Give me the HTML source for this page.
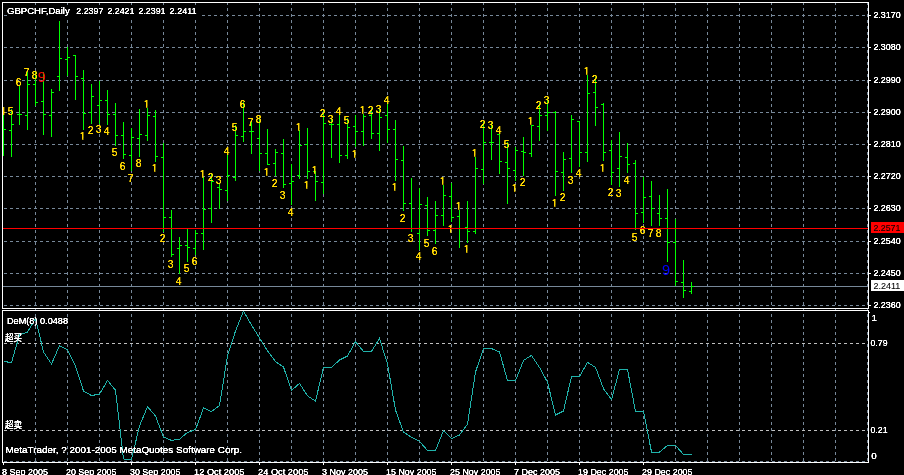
<!DOCTYPE html>
<html lang="en"><head><meta charset="utf-8"><title>GBPCHF,Daily</title>
<style>html,body{margin:0;padding:0;background:#000;overflow:hidden}svg{display:block}text{font-family:"Liberation Sans", sans-serif;font-size:9.8px;fill:#fff;stroke:#fff;stroke-width:.08px;white-space:pre}.cjk{font-family:"Liberation Sans","Noto Sans CJK SC",sans-serif;font-size:8.6px;stroke-width:.1px}.c{shape-rendering:crispEdges}.y{fill:#ffd700;stroke:#ffd700;stroke-width:.05px;font-size:10.3px;text-anchor:middle}</style></head><body>
<svg width="904" height="475" viewBox="0 0 904 475" style="will-change:transform">
<defs><filter id="th" x="0" y="0" width="100%" height="100%" filterUnits="userSpaceOnUse" color-interpolation-filters="sRGB"><feComponentTransfer><feFuncA type="linear" slope="1.8" intercept="-0.12"/></feComponentTransfer></filter><clipPath id="ca"><rect x="3" y="3" width="865" height="305"/></clipPath><clipPath id="c1"><rect x="-4" y="-10" width="8" height="9.15"/><rect x="-0.4" y="-1" width="1.15" height="1.2"/></clipPath></defs>
<rect width="904" height="475" fill="#000"/>
<g class="c" stroke="#778899" stroke-width="1" stroke-dasharray="3 3" fill="none">
<line x1="35.5" y1="2" x2="35.5" y2="462"/>
<line x1="67.5" y1="2" x2="67.5" y2="462"/>
<line x1="99.5" y1="2" x2="99.5" y2="462"/>
<line x1="131.5" y1="2" x2="131.5" y2="462"/>
<line x1="163.5" y1="2" x2="163.5" y2="462"/>
<line x1="195.5" y1="2" x2="195.5" y2="462"/>
<line x1="227.5" y1="2" x2="227.5" y2="462"/>
<line x1="259.5" y1="2" x2="259.5" y2="462"/>
<line x1="291.5" y1="2" x2="291.5" y2="462"/>
<line x1="323.5" y1="2" x2="323.5" y2="462"/>
<line x1="355.5" y1="2" x2="355.5" y2="462"/>
<line x1="387.5" y1="2" x2="387.5" y2="462"/>
<line x1="419.5" y1="2" x2="419.5" y2="462"/>
<line x1="451.5" y1="2" x2="451.5" y2="462"/>
<line x1="483.5" y1="2" x2="483.5" y2="462"/>
<line x1="515.5" y1="2" x2="515.5" y2="462"/>
<line x1="547.5" y1="2" x2="547.5" y2="462"/>
<line x1="579.5" y1="2" x2="579.5" y2="462"/>
<line x1="611.5" y1="2" x2="611.5" y2="462"/>
<line x1="643.5" y1="2" x2="643.5" y2="462"/>
<line x1="675.5" y1="2" x2="675.5" y2="462"/>
<line x1="707.5" y1="2" x2="707.5" y2="462"/>
<line x1="739.5" y1="2" x2="739.5" y2="462"/>
<line x1="771.5" y1="2" x2="771.5" y2="462"/>
<line x1="803.5" y1="2" x2="803.5" y2="462"/>
<line x1="835.5" y1="2" x2="835.5" y2="462"/>
<line x1="867.5" y1="2" x2="867.5" y2="462"/>
<line x1="4" y1="15.5" x2="868" y2="15.5"/>
<line x1="4" y1="47.5" x2="868" y2="47.5"/>
<line x1="4" y1="80.5" x2="868" y2="80.5"/>
<line x1="4" y1="112.5" x2="868" y2="112.5"/>
<line x1="4" y1="144.5" x2="868" y2="144.5"/>
<line x1="4" y1="176.5" x2="868" y2="176.5"/>
<line x1="4" y1="208.5" x2="868" y2="208.5"/>
<line x1="4" y1="241.5" x2="868" y2="241.5"/>
<line x1="4" y1="273.5" x2="868" y2="273.5"/>
<line x1="4" y1="305.5" x2="868" y2="305.5"/>
<line x1="4" y1="461.5" x2="868" y2="461.5"/>
</g>
<g class="c" stroke="#c0c0c0" stroke-width="1" stroke-dasharray="3 3" fill="none">
<line x1="4" y1="343.5" x2="868" y2="343.5"/>
<line x1="4" y1="430.5" x2="868" y2="430.5"/>
</g>
<rect class="c" x="3" y="286" width="865" height="1" fill="#778899"/>
<path class="c" clip-path="url(#ca)" d="M3.5 108V156M1 118.5H3M4 129.5H6M11.5 109V157M9 130.5H11M12 124.5H14M19.5 86V125M17 114.5H19M20 114.5H22M27.5 72V130M25 115.5H27M28 84.5H30M35.5 72V106M33 84.5H35M36 102.5H38M43.5 72V135M41 101.5H43M44 114.5H46M51.5 89V137M49 115.5H51M52 92.5H54M59.5 21V91M57 76.5H59M60 58.5H62M67.5 47V76M65 59.5H67M68 57.5H70M75.5 55V100M73 55.5H75M76 76.5H78M83.5 70V130M81 78.5H83M84 113.5H86M91.5 84V124M89 112.5H91M92 96.5H94M99.5 81V124M97 105.5H99M100 100.5H102M107.5 90V125M105 100.5H107M108 114.5H110M115.5 103V146M113 114.5H115M116 135.5H118M123.5 122V159M121 135.5H123M124 154.5H126M131.5 128V171M129 155.5H131M132 137.5H134M139.5 109V157M137 138.5H139M140 134.5H142M147.5 108V141M145 135.5H147M148 115.5H150M155.5 110V162M153 116.5H155M156 156.5H158M163.5 143V232M161 157.5H163M164 217.5H166M171.5 210V257M169 217.5H171M172 254.5H174M179.5 237V274M177 248.5H179M180 245.5H182M187.5 229V262M185 245.5H187M188 247.5H190M195.5 230V255M193 248.5H195M196 233.5H198M203.5 177V250M201 233.5H203M204 209.5H206M211.5 174V223M209 208.5H211M212 181.5H214M219.5 184V209M217 187.5H219M220 189.5H222M227.5 155V201M225 190.5H227M228 175.5H230M235.5 125V181M233 177.5H235M236 135.5H238M243.5 102V142M241 136.5H243M244 131.5H246M251.5 121V154M249 131.5H251M252 131.5H254M259.5 117V171M257 138.5H259M260 153.5H262M267.5 129V165M265 153.5H267M268 164.5H270M275.5 149V176M273 163.5H275M276 152.5H278M283.5 139V188M281 153.5H283M284 184.5H286M291.5 164V205M289 183.5H291M292 181.5H294M299.5 130V179M297 175.5H299M300 145.5H302M307.5 128V179M305 144.5H307M308 171.5H310M315.5 171V201M313 171.5H315M316 181.5H318M323.5 111V194M321 182.5H323M324 123.5H326M331.5 118V158M329 124.5H331M332 124.5H334M339.5 109V163M337 124.5H339M340 155.5H342M347.5 118V159M345 155.5H347M348 127.5H350M355.5 115V147M353 126.5H355M356 131.5H358M363.5 114V146M361 131.5H363M364 116.5H366M371.5 108V139M369 115.5H371M372 133.5H374M379.5 108V151M377 133.5H379M380 117.5H382M387.5 102V143M385 115.5H387M388 129.5H390M395.5 120V181M393 129.5H395M396 159.5H398M403.5 146V211M401 160.5H403M404 203.5H406M411.5 178V232M409 203.5H411M412 228.5H414M419.5 188V250M417 233.5H419M420 204.5H422M427.5 197V236M425 205.5H427M428 230.5H430M435.5 201V244M433 230.5H435M436 215.5H438M443.5 185V226M441 215.5H443M444 195.5H446M451.5 183V222M449 196.5H451M452 217.5H454M459.5 210V248M457 216.5H459M460 228.5H462M467.5 201V243M465 227.5H467M468 231.5H470M475.5 157V234M473 231.5H475M476 168.5H478M483.5 122V184M481 169.5H483M484 142.5H486M491.5 123V160M489 142.5H491M492 142.5H494M499.5 134V174M497 134.5H499M500 161.5H502M507.5 142V204M505 162.5H507M508 168.5H510M515.5 147V181M513 170.5H515M516 150.5H518M523.5 137V176M521 151.5H523M524 152.5H526M531.5 125V157M529 153.5H531M532 125.5H534M539.5 103V141M537 126.5H539M540 115.5H542M547.5 98V131M545 115.5H547M548 112.5H550M555.5 111V196M553 112.5H555M556 171.5H558M563.5 152V191M561 172.5H563M564 159.5H566M571.5 115V173M569 158.5H571M572 119.5H574M579.5 121V167M577 121.5H579M580 152.5H582M587.5 75V162M585 152.5H587M588 93.5H590M595.5 77V126M593 92.5H595M596 107.5H598M603.5 103V161M601 104.5H603M604 152.5H606M611.5 140V185M609 150.5H611M612 172.5H614M619.5 132V187M617 168.5H619M620 156.5H622M627.5 143V173M625 157.5H627M628 164.5H630M635.5 160V230M633 163.5H635M636 213.5H638M643.5 177V223M641 212.5H643M644 197.5H646M651.5 181V226M649 196.5H651M652 208.5H654M659.5 195V226M657 213.5H659M660 218.5H662M667.5 189V262M665 218.5H667M668 242.5H670M675.5 219V286M673 242.5H675M676 281.5H678M683.5 260V298M681 282.5H683M684 290.5H686M691.5 282V294M689 291.5H691M692 286.5H694" stroke="#00ff00" stroke-width="1" fill="none"/>
<g filter="url(#th)" clip-path="url(#ca)">
<text x="2.7" y="114.6" class="y">4</text>
<text x="10.7" y="114.6" class="y">5</text>
<text x="18.7" y="85.6" class="y">6</text>
<text x="26.7" y="75.6" class="y">7</text>
<text x="34.7" y="78.6" class="y">8</text>
<g transform="translate(82.7 139.6)" clip-path="url(#c1)"><text class="y">1</text></g>
<text x="90.7" y="133.6" class="y">2</text>
<text x="98.7" y="132.6" class="y">3</text>
<text x="106.7" y="134.6" class="y">4</text>
<text x="114.7" y="155.6" class="y">5</text>
<text x="122.7" y="169.6" class="y">6</text>
<text x="130.7" y="181.6" class="y">7</text>
<text x="138.7" y="166.6" class="y">8</text>
<g transform="translate(146.7 107.6)" clip-path="url(#c1)"><text class="y">1</text></g>
<g transform="translate(154.7 171.6)" clip-path="url(#c1)"><text class="y">1</text></g>
<text x="162.7" y="241.6" class="y">2</text>
<text x="170.7" y="267.6" class="y">3</text>
<text x="178.7" y="284.6" class="y">4</text>
<text x="186.7" y="271.6" class="y">5</text>
<text x="194.7" y="264.6" class="y">6</text>
<g transform="translate(202.7 177.6)" clip-path="url(#c1)"><text class="y">1</text></g>
<text x="210.7" y="180.6" class="y">2</text>
<text x="218.7" y="183.6" class="y">3</text>
<text x="226.7" y="154.6" class="y">4</text>
<text x="234.7" y="130.6" class="y">5</text>
<text x="242.7" y="107.6" class="y">6</text>
<text x="250.7" y="125.6" class="y">7</text>
<text x="258.7" y="122.6" class="y">8</text>
<g transform="translate(266.7 175.6)" clip-path="url(#c1)"><text class="y">1</text></g>
<text x="274.7" y="186.6" class="y">2</text>
<text x="282.7" y="198.6" class="y">3</text>
<text x="290.7" y="215.6" class="y">4</text>
<g transform="translate(298.7 130.6)" clip-path="url(#c1)"><text class="y">1</text></g>
<g transform="translate(306.7 188.6)" clip-path="url(#c1)"><text class="y">1</text></g>
<g transform="translate(314.7 173.6)" clip-path="url(#c1)"><text class="y">1</text></g>
<text x="322.7" y="116.6" class="y">2</text>
<text x="330.7" y="122.6" class="y">3</text>
<text x="338.7" y="114.6" class="y">4</text>
<text x="346.7" y="123.6" class="y">5</text>
<g transform="translate(354.7 157.6)" clip-path="url(#c1)"><text class="y">1</text></g>
<g transform="translate(362.7 113.6)" clip-path="url(#c1)"><text class="y">1</text></g>
<text x="370.7" y="113.6" class="y">2</text>
<text x="378.7" y="112.6" class="y">3</text>
<text x="386.7" y="103.6" class="y">4</text>
<g transform="translate(394.7 190.6)" clip-path="url(#c1)"><text class="y">1</text></g>
<text x="402.7" y="221.6" class="y">2</text>
<text x="410.7" y="241.6" class="y">3</text>
<text x="418.7" y="259.6" class="y">4</text>
<text x="426.7" y="246.6" class="y">5</text>
<text x="434.7" y="254.6" class="y">6</text>
<g transform="translate(442.7 184.6)" clip-path="url(#c1)"><text class="y">1</text></g>
<g transform="translate(450.7 232.6)" clip-path="url(#c1)"><text class="y">1</text></g>
<g transform="translate(458.7 209.6)" clip-path="url(#c1)"><text class="y">1</text></g>
<g transform="translate(466.7 252.6)" clip-path="url(#c1)"><text class="y">1</text></g>
<g transform="translate(474.7 156.6)" clip-path="url(#c1)"><text class="y">1</text></g>
<text x="482.7" y="127.6" class="y">2</text>
<text x="490.7" y="128.6" class="y">3</text>
<text x="498.7" y="133.6" class="y">4</text>
<text x="506.7" y="147.6" class="y">5</text>
<g transform="translate(514.7 191.6)" clip-path="url(#c1)"><text class="y">1</text></g>
<text x="522.7" y="185.6" class="y">2</text>
<g transform="translate(530.7 124.6)" clip-path="url(#c1)"><text class="y">1</text></g>
<text x="538.7" y="108.6" class="y">2</text>
<text x="546.7" y="103.6" class="y">3</text>
<g transform="translate(554.7 206.6)" clip-path="url(#c1)"><text class="y">1</text></g>
<text x="562.7" y="200.6" class="y">2</text>
<text x="570.7" y="183.6" class="y">3</text>
<text x="578.7" y="176.6" class="y">4</text>
<g transform="translate(586.7 74.6)" clip-path="url(#c1)"><text class="y">1</text></g>
<text x="594.7" y="82.6" class="y">2</text>
<g transform="translate(602.7 171.6)" clip-path="url(#c1)"><text class="y">1</text></g>
<text x="610.7" y="195.6" class="y">2</text>
<text x="618.7" y="196.6" class="y">3</text>
<text x="626.7" y="183.6" class="y">4</text>
<text x="634.7" y="240.6" class="y">5</text>
<text x="642.7" y="233.6" class="y">6</text>
<text x="650.7" y="236.6" class="y">7</text>
<text x="658.7" y="236.6" class="y">8</text>
</g>
<text x="41.7" y="81.5" style="fill:#ff0000;stroke:none;font-size:14.5px;text-anchor:middle">9</text>
<text x="666" y="274.6" style="fill:#0000ff;stroke:none;font-size:14.5px;text-anchor:middle">9</text>
<rect class="c" x="3" y="228" width="865" height="1" fill="#ff0000"/>
<polyline class="c" points="3.5,361.6 11.5,362.4 19.5,335.0 27.5,332.0 35.5,318.5 43.5,352.0 51.5,364.0 59.5,345.6 67.5,350.0 75.5,366.0 83.5,391.0 91.5,395.5 99.5,394.2 107.5,380.4 115.5,390.2 123.5,459.0 131.5,459.4 139.5,426.0 147.5,406.6 155.5,416.0 163.5,437.0 171.5,440.4 179.5,439.2 187.5,432.4 195.5,429.6 203.5,408.0 211.5,411.6 219.5,405.6 227.5,356.0 235.5,331.0 243.5,311.0 251.5,325.0 259.5,338.0 267.5,351.0 275.5,361.6 283.5,367.0 291.5,390.4 299.5,383.4 307.5,395.8 315.5,401.2 323.5,367.4 331.5,367.4 339.5,360.0 347.5,356.0 355.5,341.6 363.5,351.4 371.5,351.4 379.5,338.4 387.5,364.0 395.5,410.0 403.5,432.0 411.5,437.4 419.5,441.4 427.5,450.4 435.5,450.4 443.5,430.6 451.5,438.6 459.5,435.0 467.5,424.0 475.5,372.0 483.5,348.6 491.5,348.6 499.5,352.0 507.5,380.4 515.5,380.4 523.5,360.4 531.5,355.4 539.5,367.4 547.5,382.2 555.5,415.0 563.5,411.0 571.5,376.5 579.5,376.5 587.5,362.4 595.5,367.4 603.5,388.7 611.5,399.5 619.5,369.6 627.5,369.6 635.5,411.4 643.5,411.4 651.5,452.0 659.5,452.0 667.5,445.4 675.5,445.4 683.5,454.4 691.5,454.4" stroke="#20b2aa" stroke-width="1" fill="none"/>
<g class="c" fill="none" stroke="#fff" stroke-width="1">
<rect x="2.5" y="2.5" width="866" height="306"/>
<rect x="2.5" y="310.5" width="866" height="152"/>
</g>
<g class="c" fill="#fff">
<rect x="869" y="15" width="2" height="1"/>
<rect x="869" y="47" width="2" height="1"/>
<rect x="869" y="80" width="2" height="1"/>
<rect x="869" y="112" width="2" height="1"/>
<rect x="869" y="144" width="2" height="1"/>
<rect x="869" y="176" width="2" height="1"/>
<rect x="869" y="208" width="2" height="1"/>
<rect x="869" y="241" width="2" height="1"/>
<rect x="869" y="273" width="2" height="1"/>
<rect x="869" y="305" width="2" height="1"/>
<rect x="3" y="463" width="1" height="2"/>
<rect x="67" y="463" width="1" height="2"/>
<rect x="131" y="463" width="1" height="2"/>
<rect x="195" y="463" width="1" height="2"/>
<rect x="259" y="463" width="1" height="2"/>
<rect x="323" y="463" width="1" height="2"/>
<rect x="387" y="463" width="1" height="2"/>
<rect x="451" y="463" width="1" height="2"/>
<rect x="515" y="463" width="1" height="2"/>
<rect x="579" y="463" width="1" height="2"/>
<rect x="643" y="463" width="1" height="2"/>
<rect x="869" y="312" width="1" height="1"/>
</g>
<rect x="7" y="5" width="192" height="12" fill="#000"/>
<g filter="url(#th)">
<text x="7" y="14" textLength="62.7" lengthAdjust="spacingAndGlyphs">GBPCHF,Daily</text>
<text x="76.3" y="14" textLength="27" lengthAdjust="spacingAndGlyphs">2.2397</text>
<text x="107.4" y="14" textLength="27" lengthAdjust="spacingAndGlyphs">2.2421</text>
<text x="138.5" y="14" textLength="27" lengthAdjust="spacingAndGlyphs">2.2391</text>
<text x="169.60000000000002" y="14" textLength="27" lengthAdjust="spacingAndGlyphs">2.2411</text>
<text x="873.4" y="17.6" textLength="27.4" lengthAdjust="spacingAndGlyphs">2.3170</text>
<text x="873.4" y="49.6" textLength="27.4" lengthAdjust="spacingAndGlyphs">2.3080</text>
<text x="873.4" y="82.6" textLength="27.4" lengthAdjust="spacingAndGlyphs">2.2990</text>
<text x="873.4" y="114.6" textLength="27.4" lengthAdjust="spacingAndGlyphs">2.2900</text>
<text x="873.4" y="146.6" textLength="27.4" lengthAdjust="spacingAndGlyphs">2.2810</text>
<text x="873.4" y="178.6" textLength="27.4" lengthAdjust="spacingAndGlyphs">2.2720</text>
<text x="873.4" y="210.6" textLength="27.4" lengthAdjust="spacingAndGlyphs">2.2630</text>
<text x="873.4" y="243.6" textLength="27.4" lengthAdjust="spacingAndGlyphs">2.2540</text>
<text x="873.4" y="275.6" textLength="27.4" lengthAdjust="spacingAndGlyphs">2.2450</text>
<text x="873.4" y="307.6" textLength="27.4" lengthAdjust="spacingAndGlyphs">2.2360</text>
<rect class="c" x="871" y="222" width="33" height="11" fill="#ff0000"/>
<text x="873.4" y="230.6" textLength="27" lengthAdjust="spacingAndGlyphs" style="fill:#000;stroke:#000">2.2571</text>
<rect class="c" x="871" y="280" width="33" height="11" fill="#fff"/>
<text x="873.4" y="288.6" textLength="27" lengthAdjust="spacingAndGlyphs" style="fill:#000;stroke:#000">2.2411</text>
<text x="7" y="324" textLength="61" lengthAdjust="spacingAndGlyphs">DeM(8) 0.0488</text>
<text x="5" y="340.8" class="cjk">超买</text>
<text x="5" y="427.8" class="cjk">超卖</text>
<text x="5.5" y="452.5" textLength="236.5" lengthAdjust="spacingAndGlyphs">MetaTrader, ? 2001-2005 MetaQuotes Software Corp.</text>
<text x="871.5" y="321">1</text>
<text x="870.5" y="346" textLength="17" lengthAdjust="spacingAndGlyphs">0.79</text>
<text x="870.5" y="433" textLength="17" lengthAdjust="spacingAndGlyphs">0.21</text>
<text x="871.3" y="458.5">0</text>
<text x="2" y="474.6" textLength="46" lengthAdjust="spacingAndGlyphs">8 Sep 2005</text>
<text x="66" y="474.6" textLength="50.5" lengthAdjust="spacingAndGlyphs">20 Sep 2005</text>
<text x="130" y="474.6" textLength="50.5" lengthAdjust="spacingAndGlyphs">30 Sep 2005</text>
<text x="194" y="474.6" textLength="50.5" lengthAdjust="spacingAndGlyphs">12 Oct 2005</text>
<text x="258" y="474.6" textLength="50.5" lengthAdjust="spacingAndGlyphs">24 Oct 2005</text>
<text x="322" y="474.6" textLength="46" lengthAdjust="spacingAndGlyphs">3 Nov 2005</text>
<text x="386" y="474.6" textLength="50.5" lengthAdjust="spacingAndGlyphs">15 Nov 2005</text>
<text x="450" y="474.6" textLength="50.5" lengthAdjust="spacingAndGlyphs">25 Nov 2005</text>
<text x="514" y="474.6" textLength="46" lengthAdjust="spacingAndGlyphs">7 Dec 2005</text>
<text x="578" y="474.6" textLength="50.5" lengthAdjust="spacingAndGlyphs">19 Dec 2005</text>
<text x="642" y="474.6" textLength="50.5" lengthAdjust="spacingAndGlyphs">29 Dec 2005</text>
</g>
</svg></body></html>
